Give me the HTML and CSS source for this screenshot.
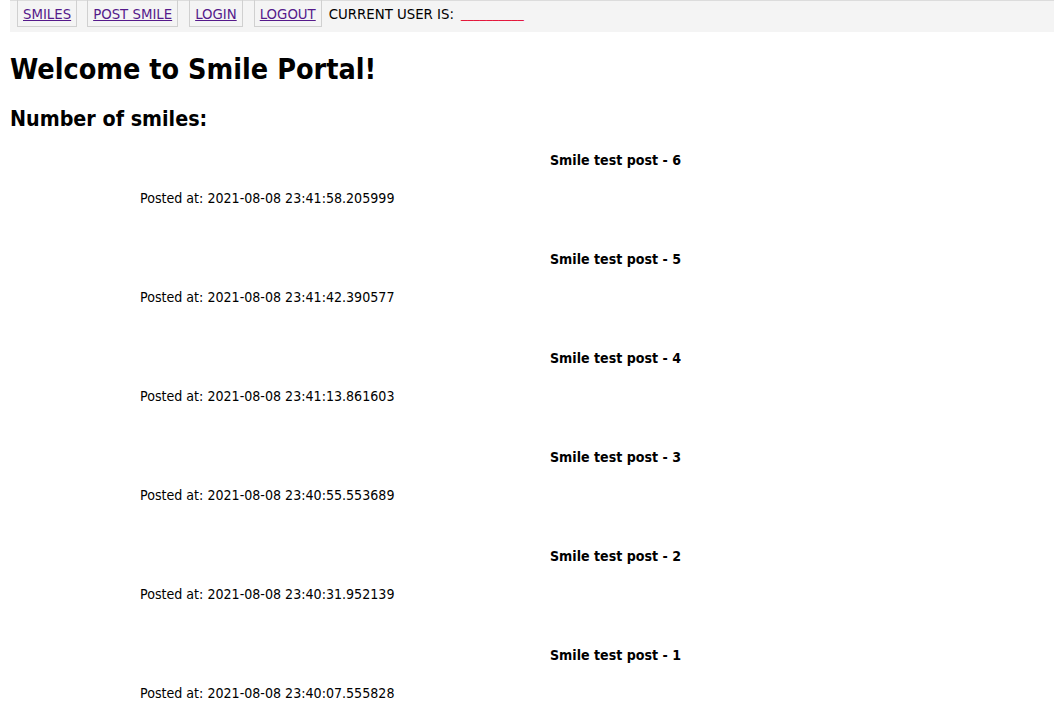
FILE: index.html
```html
<!DOCTYPE html>
<html>
<head>
<meta charset="utf-8">
<title>Smile Portal</title>
<link rel="stylesheet" href="styles.css">
</head>
<body>
<nav class="nav">
  <a class="nav-item" href="#">SMILES</a>
  <a class="nav-item" href="#">POST SMILE</a>
  <a class="nav-item" href="#">LOGIN</a>
  <a class="nav-item" href="#">LOGOUT</a>
  <span class="user">CURRENT USER IS:</span>
  <span class="user-name">__________</span>
</nav>
<h1 class="title">Welcome to Smile Portal!</h1>
<h2 class="subtitle">Number of smiles:</h2>
<div class="posts">
  <div class="post"><div class="post-title">Smile test post - 6</div><div class="post-date">Posted at: 2021-08-08 23:41:58.205999</div></div>
  <div class="post"><div class="post-title">Smile test post - 5</div><div class="post-date">Posted at: 2021-08-08 23:41:42.390577</div></div>
  <div class="post"><div class="post-title">Smile test post - 4</div><div class="post-date">Posted at: 2021-08-08 23:41:13.861603</div></div>
  <div class="post"><div class="post-title">Smile test post - 3</div><div class="post-date">Posted at: 2021-08-08 23:40:55.553689</div></div>
  <div class="post"><div class="post-title">Smile test post - 2</div><div class="post-date">Posted at: 2021-08-08 23:40:31.952139</div></div>
  <div class="post"><div class="post-title">Smile test post - 1</div><div class="post-date">Posted at: 2021-08-08 23:40:07.555828</div></div>
</div>
</body>
</html>
```

FILE: styles.css
```css
html, body {
  margin: 0;
  padding: 0;
  background: #ffffff;
}
body {
  padding: 0 0 0 10px;
  font-family: "DejaVu Sans Condensed", "DejaVu Sans", sans-serif;
  color: #000;
  overflow: hidden;
}
.nav {
  display: flex;
  align-items: flex-start;
  height: 31px;
  background: #f4f4f4;
  border-top: 1px solid #dcdcdc;
  padding-left: 7px;
  font-size: 14.8px;
}
.nav-item {
  display: block;
  margin-top: -1px;
  height: 26px;
  line-height: 27px;
  padding: 0 5px;
  border: 1px solid #d0d0d0;
  border-top: none;
  margin-right: 11px;
  color: #551a8b;
  text-decoration: underline;
}
.nav-item:first-child {
  margin-right: 10px;
}
.nav-item:nth-child(4) {
  margin-right: 7px;
}
.user {
  line-height: 27px;
  margin-top: -1px;
}
.user-name {
  display: block;
  color: #e4173c;
  font-size: 14px;
  line-height: 26px;
  margin-top: -1px;
  margin-left: 7px;
}
.title {
  margin: 0;
  padding-top: 19px;
  font-size: 28.5px;
  line-height: 38px;
  font-weight: bold;
}
.subtitle {
  margin: 0;
  padding-top: 16px;
  font-size: 21.3px;
  line-height: 28px;
  font-weight: bold;
}
.posts {
  padding-left: 130px;
  padding-top: 18px;
}
.post {
  height: 99px;
  font-size: 14.1px;
}
.post-title {
  margin-left: 37px;
  text-align: center;
  font-weight: bold;
  line-height: 18px;
}
.post-date {
  margin-top: 20px;
  line-height: 18px;
}
```
